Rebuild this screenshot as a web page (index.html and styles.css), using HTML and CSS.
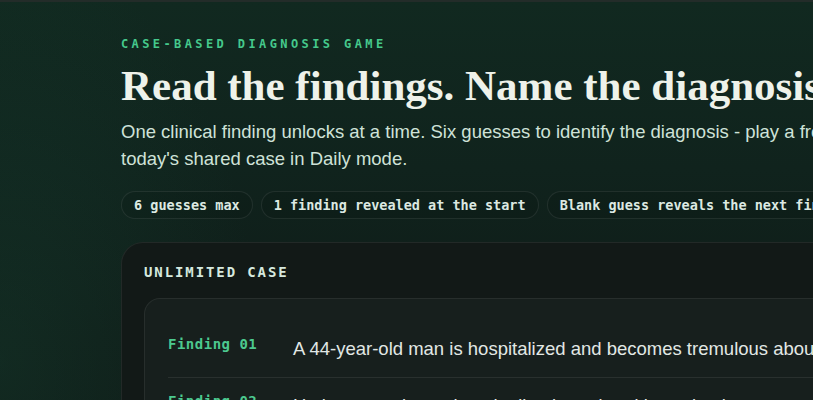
FILE: index.html
```html
<!DOCTYPE html>
<html lang="en">
<head>
<meta charset="utf-8">
<title>Case-Based Diagnosis Game</title>
<link rel="stylesheet" href="styles.css">
</head>
<body>
<div class="topline"></div>
<main class="page">
  <section class="hero">
    <p class="eyebrow">CASE-BASED DIAGNOSIS GAME</p>
    <h1 class="title">Read the findings. Name the diagnosis.</h1>
    <p class="lede">One clinical finding unlocks at a time. Six guesses to identify the diagnosis - play a fresh case in Unlimited mode or try today's shared case in Daily mode.</p>
    <ul class="chips">
      <li class="chip">6 guesses max</li>
      <li class="chip">1 finding revealed at the start</li>
      <li class="chip">Blank guess reveals the next finding</li>
    </ul>
  </section>
  <section class="card">
    <h2 class="card-title">UNLIMITED CASE</h2>
    <div class="findings">
      <div class="finding">
        <span class="finding-label">Finding 01</span>
        <p class="finding-text">A 44-year-old man is hospitalized and becomes tremulous about 36 hours after admission.</p>
      </div>
      <div class="finding">
        <span class="finding-label">Finding 02</span>
        <p class="finding-text">He becomes intermittently disoriented and is seeing insects on the walls.</p>
      </div>
    </div>
  </section>
</main>
</body>
</html>
```

FILE: styles.css
```css
html, body {
  margin: 0;
  padding: 0;
  overflow: hidden;
}
body {
  background:
    radial-gradient(ellipse 260px 420px at 0% 75%, rgba(24, 70, 52, 0.35), rgba(24, 70, 52, 0) 100%),
    linear-gradient(180deg, #112920 0%, #10231d 35%, #0f1c18 70%, #0e1916 100%);
  min-height: 400px;
  font-family: "Liberation Sans", Arial, sans-serif;
  color: #e2e8e5;
}
.topline {
  height: 2px;
  background: #232c29;
}
.page {
  width: 1120px;
  padding: 34px 0 0 121px;
  box-sizing: content-box;
}
.eyebrow {
  margin: 0;
  font-family: "DejaVu Sans Mono", monospace;
  font-weight: bold;
  font-size: 12px;
  line-height: 16px;
  letter-spacing: 3.4px;
  color: #45c98c;
}
.title {
  margin: 10px 0 0;
  font-family: "Liberation Serif", "Times New Roman", serif;
  font-weight: bold;
  font-size: 43px;
  line-height: 1.1;
  color: #eef2ea;
  white-space: nowrap;
}
.lede {
  margin: 9px 0 0;
  max-width: 1010px;
  font-size: 18.5px;
  line-height: 27px;
  color: #cfe2d8;
}
.chips {
  list-style: none;
  margin: 19px 0 0;
  padding: 0;
  display: flex;
  gap: 8px;
}
.chip {
  border: 1px solid rgba(255, 255, 255, 0.08);
  border-radius: 999px;
  padding: 4px 12px;
  font-family: "DejaVu Sans Mono", monospace;
  font-weight: bold;
  font-size: 13.5px;
  line-height: 18px;
  color: #dce9e2;
  background: rgba(0, 0, 0, 0.08);
  white-space: nowrap;
}
.card {
  margin-top: 23px;
  background: #121917;
  border: 1px solid rgba(255, 255, 255, 0.07);
  border-radius: 22px;
  padding: 20px 22px 22px;
}
.card-title {
  margin: 0;
  font-family: "DejaVu Sans Mono", monospace;
  font-weight: bold;
  font-size: 14px;
  line-height: 18px;
  letter-spacing: 1.9px;
  color: #d6e9df;
}
.findings {
  margin-top: 17px;
  background: #171f1d;
  border: 1px solid rgba(255, 255, 255, 0.07);
  border-radius: 16px;
  padding: 22px 22px 22px 23px;
}
.finding {
  display: grid;
  grid-template-columns: 104px 1fr;
  column-gap: 21px;
  align-items: start;
  padding: 14px 0 15px;
  border-bottom: 1px solid rgba(255, 255, 255, 0.08);
}
.finding:last-child {
  border-bottom: 0;
}
.finding-label {
  font-family: "DejaVu Sans Mono", monospace;
  font-weight: bold;
  font-size: 14px;
  line-height: 18px;
  letter-spacing: 0.5px;
  color: #4cc98f;
  white-space: nowrap;
}
.finding-text {
  margin: 0;
  font-size: 18.5px;
  line-height: 27px;
  color: #e2e8e5;
}
```
